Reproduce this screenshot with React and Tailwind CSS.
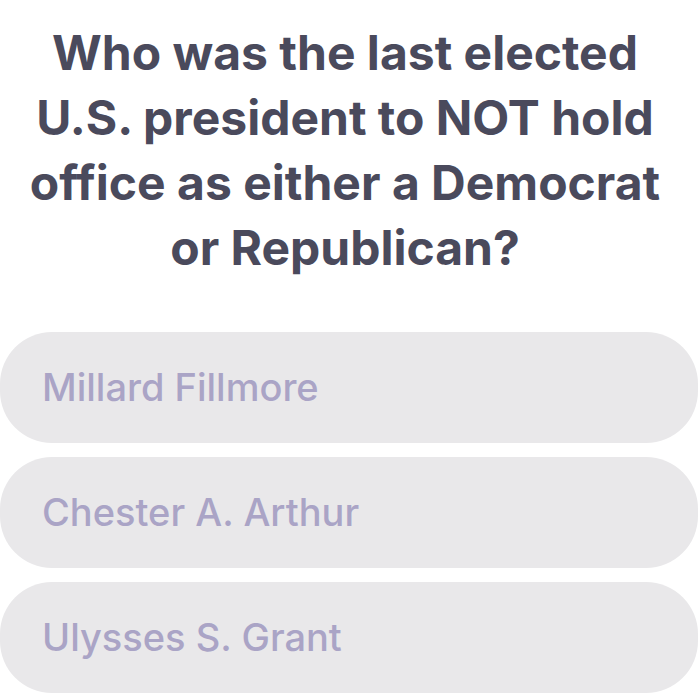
export default function App() {
  const answers = ["Millard Fillmore", "Chester A. Arthur", "Ulysses S. Grant"];
  return (
    <div className="w-[700px] h-[700px] bg-white overflow-hidden" style={{ fontFamily: "Inter, 'Noto Sans', sans-serif" }}>
      <h1 className="pt-[20px] pr-[10px] text-center text-[48px] leading-[65px] font-bold text-[#4a4a5c] whitespace-nowrap">
        Who was the last elected<br />
        U.S. president to NOT hold<br />
        office as either a Democrat<br />
        or Republican?
      </h1>
      <div className="mt-[52px] flex flex-col gap-[14px] pr-[2px]">
        {answers.map((a) => (
          <div key={a} className="h-[111px] rounded-[52px] bg-[#e9e8ea] flex items-center pl-[42px] text-[38px] font-medium text-[#aaa4c6]">
            {a}
          </div>
        ))}
      </div>
    </div>
  );
}
